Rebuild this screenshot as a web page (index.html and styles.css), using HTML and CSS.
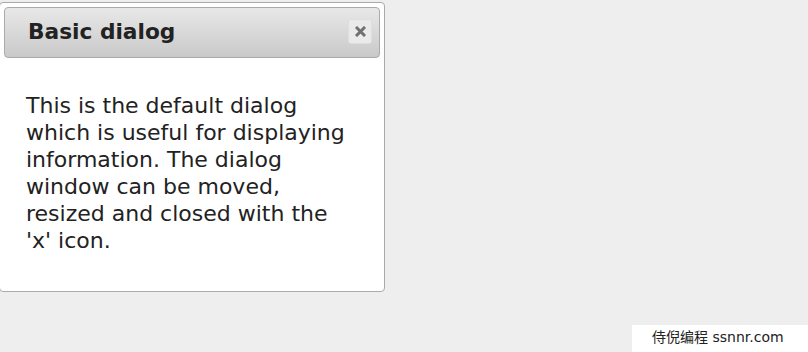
FILE: index.html
```html
<!DOCTYPE html>
<html lang="en">
<head>
<meta charset="utf-8">
<title>Basic dialog</title>
<link rel="stylesheet" href="styles.css">
</head>
<body>
<div class="dialog">
  <div class="titlebar">
    <span class="title">Basic dialog</span>
    <button class="close" type="button" aria-label="close">
      <svg width="11" height="11" viewBox="0 0 11 11"><path d="M2 2 L9 9 M9 2 L2 9" stroke="#707070" stroke-width="3" stroke-linecap="square"/></svg>
    </button>
  </div>
  <div class="content">
    <p>This is the default dialog which is useful for displaying information. The dialog window can be moved, resized and closed with the 'x' icon.</p>
  </div>
</div>
<div class="badge">侍倪编程 ssnnr.com</div>
</body>
</html>
```
FILE: styles.css
```css
html, body {
  margin: 0;
  padding: 0;
}
body {
  background: #eeeeee;
  width: 808px;
  height: 352px;
  overflow: hidden;
  font-family: "DejaVu Sans", Verdana, sans-serif;
  color: #222222;
}
.dialog {
  box-sizing: border-box;
  width: 386px;
  height: 290px;
  margin: 2px 0 0 -1px;
  padding: 4px;
  background: #ffffff;
  border: 1px solid #aaaaaa;
  border-radius: 4px;
  display: flex;
  flex-direction: column;
}
.titlebar {
  box-sizing: border-box;
  height: 51px;
  border: 1px solid #aaaaaa;
  border-radius: 4px;
  background: linear-gradient(to bottom, #e8e8e8, #c9c9c9);
  display: flex;
  align-items: center;
  justify-content: space-between;
  padding: 0 7px 2px 23px;
}
.title {
  font-weight: bold;
  font-size: 21.7px;
  color: #222222;
}
.close {
  box-sizing: border-box;
  width: 24px;
  height: 25px;
  padding: 0;
  margin: 0;
  border: 1px solid #dedede;
  border-radius: 3px;
  background: #eaeaea;
  display: flex;
  align-items: center;
  justify-content: center;
}
.content {
  padding: 11px 22px;
  font-size: 22px;
  line-height: 27px;
}
.content p {
  margin: 23px 0 0;
}
.badge {
  position: absolute;
  left: 632px;
  top: 325px;
  width: 176px;
  height: 27px;
  box-sizing: border-box;
  background: #ffffff;
  padding-left: 20px;
  font-family: "DejaVu Sans", "Noto Sans CJK SC", sans-serif;
  font-size: 14px;
  line-height: 25px;
  color: #222222;
}
```
